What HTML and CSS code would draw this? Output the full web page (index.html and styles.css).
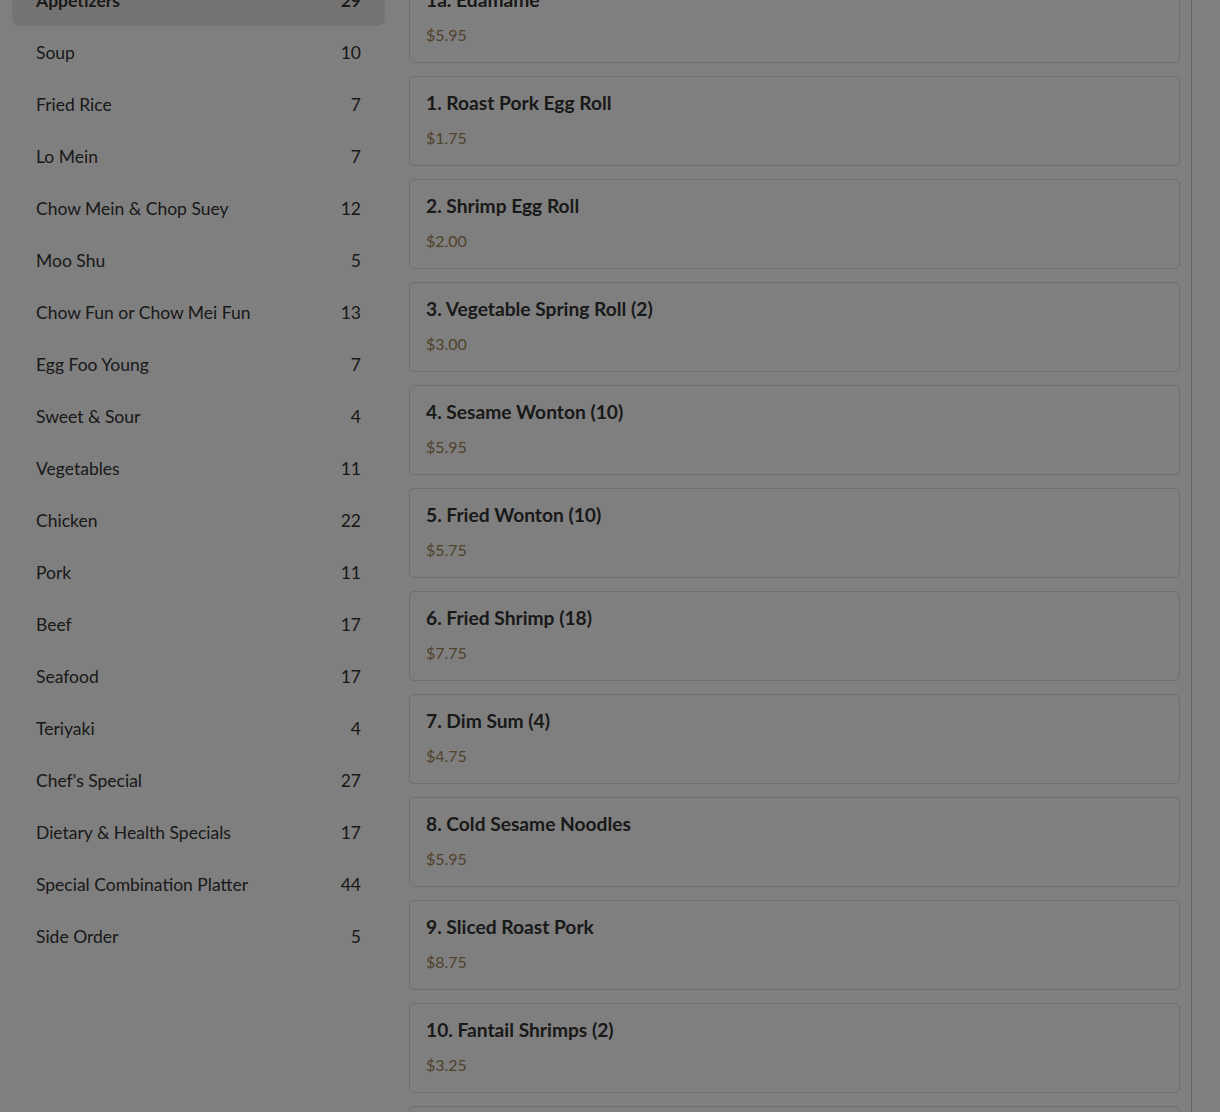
FILE: index.html
```html
<!DOCTYPE html>
<html lang="en">
<head>
<meta charset="utf-8">
<title>Menu</title>
<link rel="stylesheet" href="styles.css">
</head>
<body>
<div class="page">
  <aside class="sidebar">
    <ul class="cats">
      <li class="cat active"><span>Appetizers</span><span>29</span></li>
      <li class="cat"><span>Soup</span><span>10</span></li>
      <li class="cat"><span>Fried Rice</span><span>7</span></li>
      <li class="cat"><span>Lo Mein</span><span>7</span></li>
      <li class="cat"><span>Chow Mein &amp; Chop Suey</span><span>12</span></li>
      <li class="cat"><span>Moo Shu</span><span>5</span></li>
      <li class="cat"><span>Chow Fun or Chow Mei Fun</span><span>13</span></li>
      <li class="cat"><span>Egg Foo Young</span><span>7</span></li>
      <li class="cat"><span>Sweet &amp; Sour</span><span>4</span></li>
      <li class="cat"><span>Vegetables</span><span>11</span></li>
      <li class="cat"><span>Chicken</span><span>22</span></li>
      <li class="cat"><span>Pork</span><span>11</span></li>
      <li class="cat"><span>Beef</span><span>17</span></li>
      <li class="cat"><span>Seafood</span><span>17</span></li>
      <li class="cat"><span>Teriyaki</span><span>4</span></li>
      <li class="cat"><span>Chef's Special</span><span>27</span></li>
      <li class="cat"><span>Dietary &amp; Health Specials</span><span>17</span></li>
      <li class="cat"><span>Special Combination Platter</span><span>44</span></li>
      <li class="cat"><span>Side Order</span><span>5</span></li>
    </ul>
  </aside>
  <main class="items">
    <div class="card"><div class="title">1a. Edamame</div><div class="price">$5.95</div></div>
    <div class="card"><div class="title">1. Roast Pork Egg Roll</div><div class="price">$1.75</div></div>
    <div class="card"><div class="title">2. Shrimp Egg Roll</div><div class="price">$2.00</div></div>
    <div class="card"><div class="title">3. Vegetable Spring Roll (2)</div><div class="price">$3.00</div></div>
    <div class="card"><div class="title">4. Sesame Wonton (10)</div><div class="price">$5.95</div></div>
    <div class="card"><div class="title">5. Fried Wonton (10)</div><div class="price">$5.75</div></div>
    <div class="card"><div class="title">6. Fried Shrimp (18)</div><div class="price">$7.75</div></div>
    <div class="card"><div class="title">7. Dim Sum (4)</div><div class="price">$4.75</div></div>
    <div class="card"><div class="title">8. Cold Sesame Noodles</div><div class="price">$5.95</div></div>
    <div class="card"><div class="title">9. Sliced Roast Pork</div><div class="price">$8.75</div></div>
    <div class="card"><div class="title">10. Fantail Shrimps (2)</div><div class="price">$3.25</div></div>
    <div class="card"><div class="title">11. Crab Rangoon (8)</div><div class="price">$5.95</div></div>
  </main>
</div>
<div class="overlay"></div>
</body>
</html>
```

FILE: styles.css
```css
html, body {
  margin: 0;
  padding: 0;
  background: #ffffff;
  overflow: hidden;
  height: 1112px;
}
body {
  font-family: Lato, "Noto Sans", "Liberation Sans", sans-serif;
  color: #333333;
}
.page {
  display: flex;
  align-items: flex-start;
  gap: 24px;
  padding: 0 28px 0 12px;
}
.sidebar {
  width: 373px;
  flex: none;
  margin-top: -26px;
}
.cats {
  list-style: none;
  margin: 0;
  padding: 0;
}
.cat {
  display: flex;
  justify-content: space-between;
  align-items: center;
  height: 52px;
  padding: 0 24px;
  font-size: 17.5px;
  border-radius: 8px;
}
.cat.active {
  background: #ece8e5;
  font-weight: 700;
}
.items {
  flex: 1;
  display: flex;
  flex-direction: column;
  gap: 13px;
  margin-top: -27px;
  padding-right: 11px;
  border-right: 1px solid #c8c8c8;
  min-height: 1200px;
}
.card {
  border: 1px solid #dcdcdc;
  border-radius: 5px;
  padding: 16px 16px 18px;
  height: 90px;
  box-sizing: border-box;
}
.title {
  font-size: 19.2px;
  font-weight: 700;
  line-height: 20px;
}
.price {
  margin-top: 15px;
  font-size: 16px;
  line-height: 20px;
  color: #a28456;
}
.overlay {
  position: fixed;
  inset: 0;
  background: rgba(0, 0, 0, 0.5);
}
```
